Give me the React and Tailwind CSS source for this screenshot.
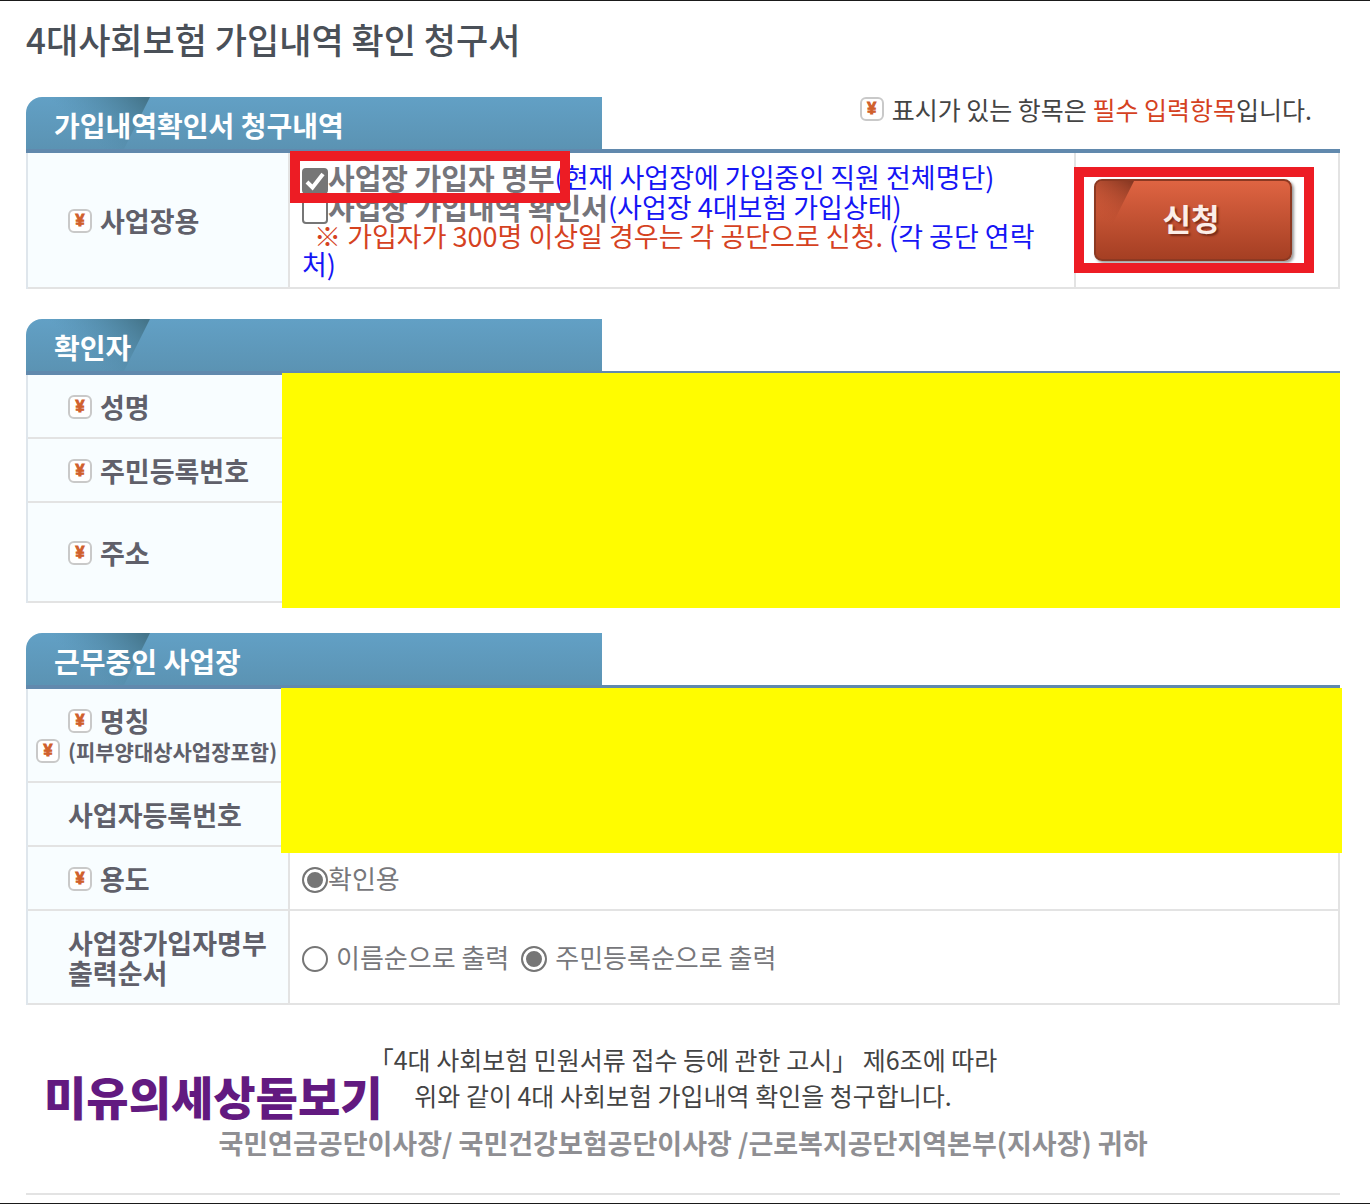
import { useState } from "react";

const FONT = "font-['Noto_Sans_CJK_KR','Noto_Sans',sans-serif]";

function RequiredMark() {
    return (
        <span className="inline-flex h-6 w-6 shrink-0 items-center justify-center rounded-md border-2 border-[#c9c9c9] bg-white font-['Liberation_Sans',sans-serif] text-base leading-none font-bold text-[#d0602c] [-webkit-text-stroke:1px_#d0602c]">
            ¥
        </span>
    );
}

function SectionHeader({ title, children }) {
    return (
        <div className="flex items-start justify-between border-b-4 border-[#6189ad]">
            <h2 className="relative flex h-[52px] w-[576px] items-center overflow-hidden rounded-tl-2xl bg-linear-to-b from-[#62a0c5] to-[#5b93b3] pt-1 pl-7 text-[28px] leading-8 font-bold text-white">
                <svg className="absolute top-0 left-0" width="124" height="52" viewBox="0 0 124 52" aria-hidden="true">
                    <defs>
                        <linearGradient id="tabFold" x1="118" y1="0" x2="72" y2="48" gradientUnits="userSpaceOnUse">
                            <stop offset="0" stopColor="#3f6d80" stopOpacity="0.85" />
                            <stop offset="1" stopColor="#4f88a6" stopOpacity="0" />
                        </linearGradient>
                    </defs>
                    <path d="M0 0H124L98 52H0Z" fill="url(#tabFold)" />
                </svg>
                <span className="relative">{title}</span>
            </h2>
            {children}
        </div>
    );
}

function FormTable({ children }) {
    return (
        <table className="w-full table-fixed border-separate border-spacing-0 border-l-2 border-[#dfe6ec]">
            <tbody>{children}</tbody>
        </table>
    );
}

function HeadCell({ required, className = "h-16", children }) {
    return (
        <th
            scope="row"
            className={`w-[262px] border-r-2 border-b-2 border-[#e3e3e3] bg-[#f8fdff] pt-0.5 pl-10 text-left text-[27px] leading-[30px] font-bold text-[#60606a] ${className}`}
        >
            <span className="flex items-center gap-2">
                {required && <RequiredMark />}
                <span>{children}</span>
            </span>
        </th>
    );
}

function Cell({ className = "", children }) {
    return <td className={`border-r-2 border-b-2 border-[#e3e3e3] ${className}`}>{children}</td>;
}

function CheckRow({ label, note, checked, onChange }) {
    return (
        <label className="flex h-[30px] items-center whitespace-nowrap">
            <span className="relative mt-2 h-[26px] w-[26px] shrink-0">
                <input
                    type="checkbox"
                    checked={checked}
                    onChange={onChange}
                    className="block h-[26px] w-[26px] appearance-none rounded border-2 border-[#767676] bg-white checked:bg-[#767676]"
                />
                {checked && (
                    <svg className="pointer-events-none absolute inset-0" width="26" height="26" viewBox="0 0 26 26" aria-hidden="true">
                        <path d="M5 14L10.5 19.5L21 6" fill="none" stroke="white" strokeWidth="4" />
                    </svg>
                )}
            </span>
            <b className="text-[29px] text-[#75757b]">{label}</b>
            <span className="text-[#1515f5]">{note}</span>
        </label>
    );
}

function RadioOption({ name, label, gap = "gap-2", ...rest }) {
    return (
        <label className={`flex items-center text-[26px] leading-[30px] text-[#77777b] ${gap}`}>
            <input
                type="radio"
                name={name}
                className="mt-1 h-[26px] w-[26px] shrink-0 appearance-none rounded-full border-2 border-[#767676] bg-white checked:bg-[#767676] checked:shadow-[inset_0_0_0_3px_white]"
                {...rest}
            />
            {label}
        </label>
    );
}

export default function App() {
    const [roster, setRoster] = useState(true);
    const [history, setHistory] = useState(false);

    return (
        <main className={`min-h-screen border-y border-[#1a1a1a] bg-white pr-[30px] pb-2 pl-[26px] ${FONT}`}>
            <h1 className="pb-5 text-[35px] leading-[76px] font-medium text-[#4a5058]">4대사회보험 가입내역 확인 청구서</h1>

            <section>
                <SectionHeader title="가입내역확인서 청구내역">
                    <p className="flex items-center gap-2 pr-7 text-[25px] leading-6 whitespace-nowrap text-[#444]">
                        <RequiredMark />
                        <span>
                            표시가 있는 항목은 <span className="text-[#d5421f]">필수 입력항목</span>입니다.
                        </span>
                    </p>
                </SectionHeader>
                <FormTable>
                    <tr>
                        <HeadCell required className="h-[136px]">사업장용</HeadCell>
                        <Cell className="relative pl-3 text-[27px] leading-7">
                            <CheckRow
                                label="사업장 가입자 명부"
                                note="(현재 사업장에 가입중인 직원 전체명단)"
                                checked={roster}
                                onChange={(e) => setRoster(e.target.checked)}
                            />
                            <CheckRow
                                label="사업장 가입내역 확인서"
                                note="(사업장 4대보험 가입상태)"
                                checked={history}
                                onChange={(e) => setHistory(e.target.checked)}
                            />
                            <p className="pr-8 break-all text-[#d5421f]">
                                &nbsp; ※ 가입자가 300명 이상일 경우는 각 공단으로 신청.{" "}
                                <a href="#contacts" className="text-[#1515f5]">(각 공단 연락처)</a>
                            </p>
                            <div className="pointer-events-none absolute -top-0.5 left-0 h-[52px] w-[280px] border-10 border-[#ed1c24]" />
                        </Cell>
                        <Cell className="relative w-[264px] pl-[18px]">
                            <button
                                type="button"
                                className="relative flex h-[82px] w-[198px] items-center justify-center overflow-hidden rounded-lg border-2 border-[#8c3922] bg-linear-to-b from-[#df6442] to-[#a53f23] pr-1 pb-1 text-[31px] font-bold text-[#fbeee8] shadow-[2px_2px_3px_#999] [text-shadow:2px_2px_2px_#7a2d18]"
                            >
                                <svg className="absolute top-0 left-0" width="40" height="48" viewBox="0 0 40 48" aria-hidden="true">
                                    <defs>
                                        <linearGradient id="buttonFold" x1="36" y1="0" x2="12" y2="42" gradientUnits="userSpaceOnUse">
                                            <stop offset="0" stopColor="#7c321e" stopOpacity="0.9" />
                                            <stop offset="1" stopColor="#b84a2c" stopOpacity="0" />
                                        </linearGradient>
                                    </defs>
                                    <path d="M0 0H38L14 48H0Z" fill="url(#buttonFold)" />
                                </svg>
                                신청
                            </button>
                            <div className="pointer-events-none absolute top-[14px] -left-0.5 h-[106px] w-[240px] border-10 border-[#ed1c24]" />
                        </Cell>
                    </tr>
                </FormTable>
            </section>

            <section className="relative mt-[30px]">
                <SectionHeader title="확인자" />
                <FormTable>
                    <tr>
                        <HeadCell required>성명</HeadCell>
                        <Cell />
                    </tr>
                    <tr>
                        <HeadCell required>주민등록번호</HeadCell>
                        <Cell />
                    </tr>
                    <tr>
                        <HeadCell required className="h-[100px]">주소</HeadCell>
                        <Cell />
                    </tr>
                </FormTable>
                <div className="absolute top-[54px] right-0 -bottom-[5px] left-64 bg-[#fffc00]" />
            </section>

            <section className="relative mt-[30px]">
                <SectionHeader title="근무중인 사업장" />
                <FormTable>
                    <tr>
                        <th scope="row" className="h-[94px] w-[262px] border-r-2 border-b-2 border-[#e3e3e3] bg-[#f8fdff] pt-0.5 text-left font-bold text-[#60606a]">
                            <span className="flex items-center gap-2 pl-10 text-[27px] leading-[30px]">
                                <RequiredMark />
                                명칭
                            </span>
                            <span className="flex items-center gap-2 pl-2 text-[21px] leading-[30px] whitespace-nowrap">
                                <RequiredMark />
                                (피부양대상사업장포함)
                            </span>
                        </th>
                        <Cell />
                    </tr>
                    <tr>
                        <HeadCell>사업자등록번호</HeadCell>
                        <Cell />
                    </tr>
                    <tr>
                        <HeadCell required>용도</HeadCell>
                        <Cell className="pl-3">
                            <RadioOption name="purpose" label="확인용" gap="gap-0" defaultChecked />
                        </Cell>
                    </tr>
                    <tr>
                        <HeadCell className="h-[94px]">
                            사업장가입자명부
                            <br />
                            출력순서
                        </HeadCell>
                        <Cell className="pl-3">
                            <div className="flex gap-3">
                                <RadioOption name="order" label="이름순으로 출력" />
                                <RadioOption name="order" label="주민등록순으로 출력" defaultChecked />
                            </div>
                        </Cell>
                    </tr>
                </FormTable>
                <div className="absolute top-[55px] -right-0.5 bottom-[152px] left-[255px] bg-[#fffc00]" />
            </section>

            <footer className="relative border-b-2 border-[#e3e3e3] pt-9 pb-8 text-center text-[25px] leading-9 text-[#444]">
                <p>「4대 사회보험 민원서류 접수 등에 관한 고시」 제6조에 따라</p>
                <p>위와 같이 4대 사회보험 가입내역 확인을 청구합니다.</p>
                <p className="mt-3 text-[27px] font-bold text-[#8f8f93]">
                    국민연금공단이사장/ 국민건강보험공단이사장 /근로복지공단지역본부(지사장) 귀하
                </p>
                <strong className="absolute top-15 left-[18px] text-[46px] leading-[60px] font-black text-[#621a80]">미유의세상돋보기</strong>
            </footer>
        </main>
    );
}
